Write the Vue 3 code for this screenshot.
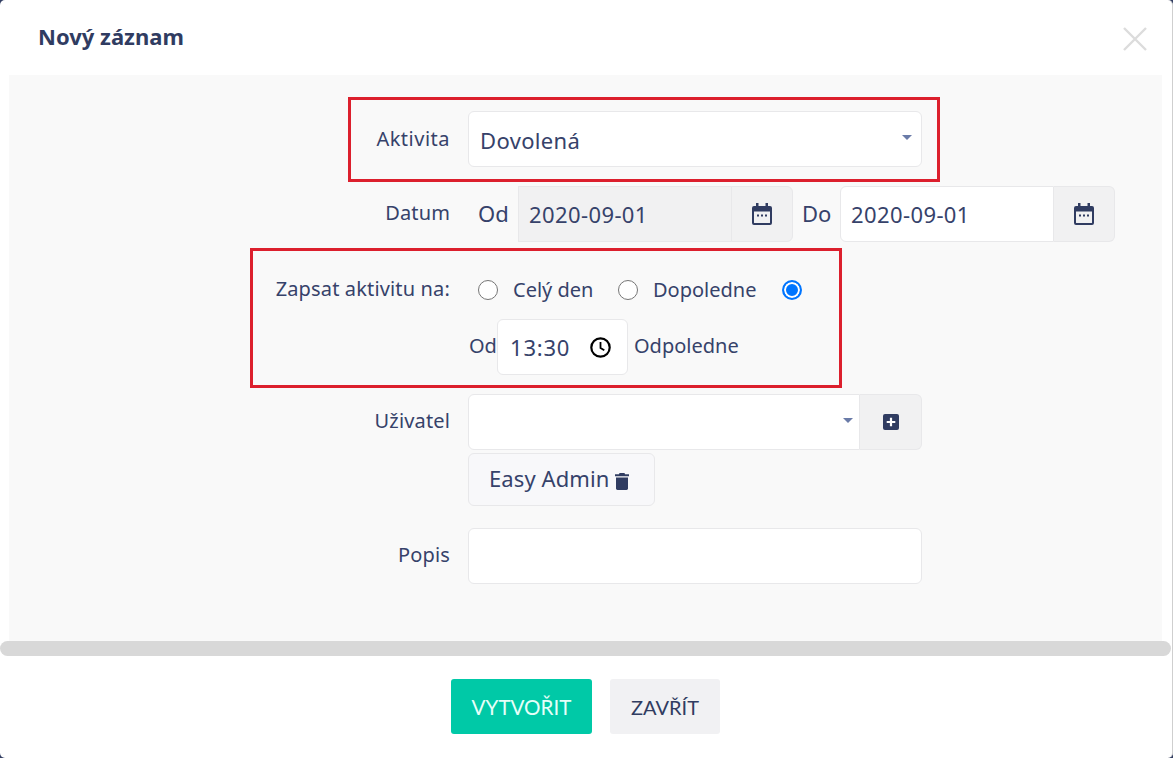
<script setup>
</script>

<template>
  <div class="modal">
    <header class="head">
      <h1 class="title">Nový záznam</h1>
      <svg class="close" viewBox="0 0 24 24" width="24" height="24"><path d="M1 1 23 23M23 1 1 23" stroke="#dcdcdc" stroke-width="2.4" fill="none"/></svg>
    </header>

    <main class="body">
      <form class="form">
        <div class="mark mark-a"></div>
        <div class="mark mark-b"></div>

        <div class="row">
          <label class="lab lab-first">Aktivita</label>
          <div class="ctl w454">
            <div class="input sel big"><span class="sel-val">Dovolená</span><i class="caret"></i></div>
          </div>
        </div>

        <div class="row">
          <label class="lab">Datum</label>
          <div class="ctl dates">
            <span class="dlab od">Od</span>
            <div class="group">
              <div class="input date dis">2020-09-01</div>
              <div class="addon a1">
                <svg width="20" height="22" viewBox="0 0 20 22"><path fill="#303c61" d="M4 0h2.500v3h7V0H16v3h2a2 2 0 0 1 2 2v15a2 2 0 0 1-2 2H2a2 2 0 0 1-2-2V5a2 2 0 0 1 2-2h2zM2 8.500V19.500a.5.5 0 0 0 .5.5h15a.5.5 0 0 0 .5-.5V8.500z"/><path fill="#303c61" d="M5 11.500h2V13.500H5zM9 11.500h2V13.500H9zM13 11.500h2V13.500h-2z"/></svg>
              </div>
            </div>
            <span class="dlab do">Do</span>
            <div class="group">
              <div class="input date">2020-09-01</div>
              <div class="addon a2">
                <svg width="20" height="22" viewBox="0 0 20 22"><path fill="#303c61" d="M4 0h2.500v3h7V0H16v3h2a2 2 0 0 1 2 2v15a2 2 0 0 1-2 2H2a2 2 0 0 1-2-2V5a2 2 0 0 1 2-2h2zM2 8.500V19.500a.5.5 0 0 0 .5.5h15a.5.5 0 0 0 .5-.5V8.500z"/><path fill="#303c61" d="M5 11.500h2V13.500H5zM9 11.500h2V13.500H9zM13 11.500h2V13.500h-2z"/></svg>
              </div>
            </div>
          </div>
        </div>

        <div class="row">
          <label class="lab lab-top">Zapsat aktivitu na:</label>
          <div class="ctl stack">
            <div class="radios">
              <span class="radio"></span><span class="rt t1">Celý den</span>
              <span class="radio"></span><span class="rt t2">Dopoledne</span>
              <span class="radio on"></span>
            </div>
            <div class="timeline">
              <span class="tl">Od</span>
              <div class="input time">
                <span class="tv">13:30</span>
                <svg width="21" height="21" viewBox="0 0 21 21"><circle cx="10.500" cy="10.500" r="9.200" fill="none" stroke="#000" stroke-width="2.200"/><path d="M10.500 5v6l3.800 2.300" fill="none" stroke="#000" stroke-width="1.800"/></svg>
              </div>
              <span class="tl tr">Odpoledne</span>
            </div>
          </div>
        </div>

        <div class="row user">
          <label class="lab">Uživatel</label>
          <div class="ctl w454 stack">
            <div class="group">
              <div class="input sel grow"><i class="caret"></i></div>
              <div class="addon plus">
                <svg width="16" height="16" viewBox="0 0 16 16"><rect width="16" height="16" rx="2" fill="#303c61"/><path d="M8 3.700v8.600M3.700 8h8.600" stroke="#fff" stroke-width="2.200"/></svg>
              </div>
            </div>
            <div class="chip">
              <span class="chip-text">Easy Admin</span>
              <svg class="trash" width="14" height="17" viewBox="0 0 14 17"><path fill="#303c61" d="M4.500 0h5l.5 1.200h4V3.300H0V1.200h4zM1 4.500h12V15.400a1.500 1.500 0 0 1-1.500 1.600h-9A1.500 1.500 0 0 1 1 15.400z"/></svg>
            </div>
          </div>
        </div>

        <div class="row">
          <label class="lab">Popis</label>
          <div class="ctl w454"><div class="input"></div></div>
        </div>
      </form>
    </main>

    <div class="scrollbar"></div>

    <footer class="foot">
      <button type="button" class="btn primary">VYTVOŘIT</button>
      <button type="button" class="btn ghost">ZAVŘÍT</button>
    </footer>
  </div>
</template>

<style>
html, body { margin: 0; background: #333f63; }
</style>

<style scoped>
.modal {
  box-sizing: border-box;
  width: 1173px;
  height: 758px;
  background: #fff;
  border-right: 1px solid #cfcfcf;
  border-radius: 5px;
  overflow: hidden;
  display: flex;
  flex-direction: column;
  font-family: "Noto Sans", "Open Sans", sans-serif;
  color: #36426a;
  font-size: 20px;
}
.head {
  height: 75px;
  flex: none;
  display: flex;
  align-items: center;
  justify-content: space-between;
  padding: 0 25px 0 38px;
}
.title {
  margin: 0 0 4px;
  font-size: 22px;
  font-weight: 700;
  color: #303c61;
}
.close { margin-top: 2px; }
.body {
  flex: none;
  height: 566px;
  margin: 0 10px 0 9px;
  background: #f9f9f9;
  box-sizing: border-box;
  padding-top: 36px;
}
.form { position: relative; }
.mark {
  position: absolute;
  box-sizing: border-box;
  border: 3px solid #dc1f2d;
  pointer-events: none;
}
.mark-a { left: 339px; top: -14px; width: 592px; height: 85px; }
.mark-b { left: 241px; top: 137px; width: 592px; height: 140px; }
.row {
  display: flex;
  margin-bottom: 19px;
}
.row.user { margin-bottom: 22px; }
.lab {
  width: 441px;
  flex: none;
  box-sizing: border-box;
  height: 54px;
  line-height: 54px;
  text-align: right;
  letter-spacing: 0.15px;
}
.lab-first { line-height: 56px; letter-spacing: 0.5px; }
.lab-top { height: 56px; line-height: 56px; }
.ctl { margin-left: 18px; }
.w454 { width: 454px; }
.stack { display: flex; flex-direction: column; }
.input {
  box-sizing: border-box;
  height: 56px;
  background: #fff;
  border: 1px solid #e8e8ea;
  border-radius: 6px;
}
.sel { display: flex; align-items: center; justify-content: space-between; padding: 0 10px 0 11px; }
.big { font-size: 22px; }
.sel-val { letter-spacing: 0.35px; margin-top: 2px; }
.grow { flex: 1; border-radius: 6px 0 0 6px; padding-right: 7px; }
.caret {
  width: 0;
  height: 0;
  border-left: 5px solid transparent;
  border-right: 5px solid transparent;
  border-top: 5px solid #6a7ba8;
  margin-top: -3px;
  margin-left: auto;
  margin-right: -1px;
}
.dates { display: flex; align-items: center; }
.dlab { font-size: 22px; line-height: 1; margin-top: -2px; }
.od { margin-left: 10px; width: 40px; }
.do { margin-left: 9px; width: 38px; }
.group { display: flex; }
.date {
  width: 214px;
  display: flex;
  align-items: center;
  padding-left: 10px;
  font-size: 22px;
  letter-spacing: 0.4px;
  border-radius: 6px 0 0 6px;
}
.dis { background: #f1f1f2; border-radius: 0; }
.addon {
  box-sizing: border-box;
  height: 56px;
  display: flex;
  align-items: center;
  justify-content: center;
  background: #f1f1f2;
  border: 1px solid #e8e8ea;
  border-radius: 0 6px 6px 0;
}
.a1, .a2 { width: 61px; }
.a1 { border-left: 1px solid #e8e8ea; width: 62px; margin-left: -1px; }
.a2 { border-left: 0; }
.plus { width: 62px; border-left: 0; }
.radios {
  height: 58px;
  display: flex;
  align-items: center;
  padding-left: 10px;
}
.radio {
  box-sizing: border-box;
  width: 20px;
  height: 20px;
  border-radius: 50%;
  background: #fff;
  border: 1px solid #767676;
  flex: none;
}
.radio.on { border: 2px solid #0075ff; box-shadow: inset 0 0 0 2px #fff; background: #0075ff; margin-left: 15px; }
.rt { margin-left: 15px; margin-top: -2px; }
.t1 { width: 105px; }
.t2 { width: 114px; }
.timeline { display: flex; align-items: center; }
.tl { margin-left: 1px; width: 28px; margin-top: -4px; }
.tr { width: auto; margin-left: 6px; }
.time {
  width: 131px;
  display: flex;
  align-items: center;
  padding-left: 12px;
  font-size: 22px;
  letter-spacing: 0.8px;
  border-radius: 6px;
}
.tv { width: 80px; flex: none; }
.chip {
  box-sizing: border-box;
  width: 187px;
  height: 53px;
  margin-top: 3px;
  display: flex;
  align-items: center;
  gap: 6px;
  padding-left: 20px;
  background: #f8f8fa;
  border: 1px solid #e8e8ea;
  border-radius: 6px;
  font-size: 22px;
}
.chip-text { letter-spacing: 0.1px; margin-top: -3px; }
.trash { margin-top: 3px; }
.scrollbar {
  flex: none;
  height: 15px;
  margin-right: 1px;
  background: #d8d8d8;
  border-radius: 8px;
}
.foot {
  flex: 1;
  display: flex;
  justify-content: center;
  align-items: flex-start;
  gap: 18px;
  padding-top: 23px;
  padding-right: 1px;
}
.btn {
  height: 55px;
  border: 0;
  border-radius: 3px;
  font-family: Lato, sans-serif;
  font-size: 20px;
  padding: 0;
}
.primary { width: 141px; background: #00c9a7; color: #e6fff9; font-size: 20.600px; }
.ghost { width: 110px; background: #f1f1f3; color: #303c61; }
</style>
